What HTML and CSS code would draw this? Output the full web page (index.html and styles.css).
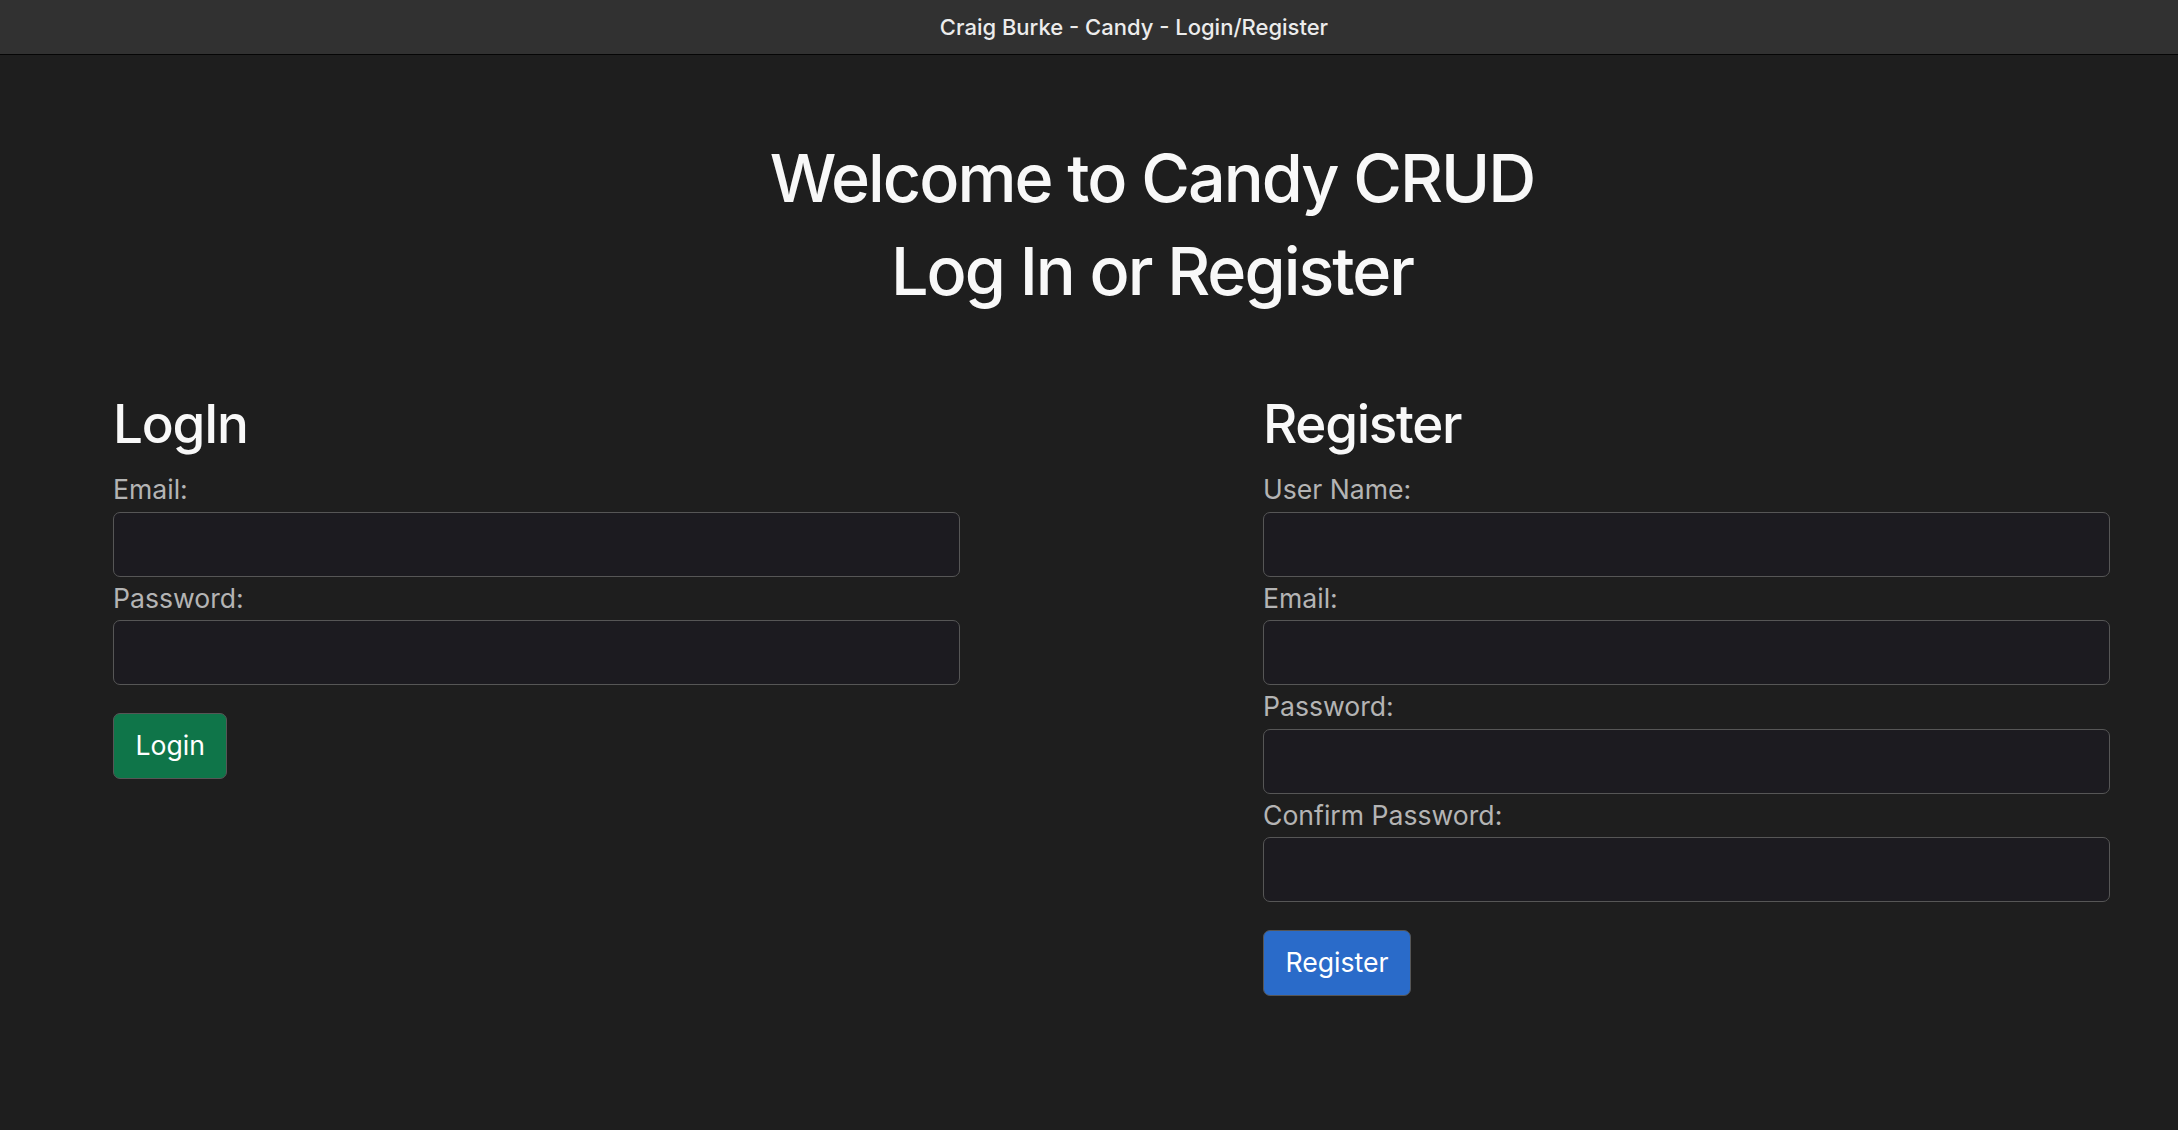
FILE: index.html
```html
<!DOCTYPE html>
<html lang="en">
<head>
<meta charset="utf-8">
<title>Craig Burke - Candy - Login/Register</title>
<link rel="stylesheet" href="styles.css">
</head>
<body>
<div class="titlebar">Craig Burke - Candy - Login/Register</div>
<main class="page">
  <header class="hero">
    <h1>Welcome to Candy CRUD</h1>
    <h1>Log In or Register</h1>
  </header>
  <div class="columns">
    <section class="panel">
      <h2>LogIn</h2>
      <form class="form">
        <label for="le">Email:</label>
        <input id="le" type="text">
        <label for="lp">Password:</label>
        <input id="lp" type="password">
        <button type="button" class="btn btn-login">Login</button>
      </form>
    </section>
    <section class="panel">
      <h2>Register</h2>
      <form class="form">
        <label for="ru">User Name:</label>
        <input id="ru" type="text">
        <label for="re">Email:</label>
        <input id="re" type="text">
        <label for="rp">Password:</label>
        <input id="rp" type="password">
        <label for="rc">Confirm Password:</label>
        <input id="rc" type="password">
        <button type="button" class="btn btn-register">Register</button>
      </form>
    </section>
  </div>
</main>
</body>
</html>
```
FILE: styles.css
```css
html, body {
  margin: 0;
  padding: 0;
}
body {
  background: #1e1e1e;
  font-family: Inter, "Noto Sans", "Liberation Sans", sans-serif;
  color: #f8f8f8;
  overflow: hidden;
}
.titlebar {
  height: 54px;
  padding-left: 90px;
  background: #313131;
  border-bottom: 1px solid #050505;
  display: flex;
  align-items: center;
  justify-content: center;
  font-size: 22px;
  font-weight: 500;
  color: #ececec;
}
.hero {
  padding-top: 83px;
  padding-left: 126px;
  text-align: center;
}
.hero h1 {
  margin: 0;
  font-size: 66.5px;
  line-height: 80px;
  font-weight: 500;
  letter-spacing: -2px;
  color: #f8f8f8;
}
.hero h1 + h1 {
  margin-top: 13px;
}
.columns {
  display: flex;
  gap: 303px;
  padding-left: 113px;
  padding-top: 81px;
}
.panel {
  width: 847px;
}
.panel h2 {
  margin: 0 0 12px;
  font-size: 53px;
  line-height: 64px;
  font-weight: 500;
  letter-spacing: -1.3px;
  color: #f8f8f8;
}
.form {
  display: flex;
  flex-direction: column;
  align-items: flex-start;
}
.form label {
  display: block;
  font-size: 26.6px;
  line-height: 43.5px;
  color: #b4b4b4;
}
.form input {
  display: block;
  width: 100%;
  height: 65px;
  box-sizing: border-box;
  margin: 0;
  background: #1c1b20;
  border: 1.5px solid #565656;
  border-radius: 7px;
  color: #dee2e6;
  font-size: 26.6px;
  font-family: inherit;
  padding: 0 20px;
}
.btn {
  margin-top: 28px;
  height: 66px;
  box-sizing: border-box;
  padding: 0 21.5px 3px;
  border: 1.5px solid #565656;
  border-radius: 7px;
  font-family: inherit;
  font-size: 26.6px;
  font-weight: 400;
  color: #ffffff;
  cursor: pointer;
}
.btn-login {
  background: #0f7549;
}
.btn-register {
  background: #2a6bc9;
}
```
